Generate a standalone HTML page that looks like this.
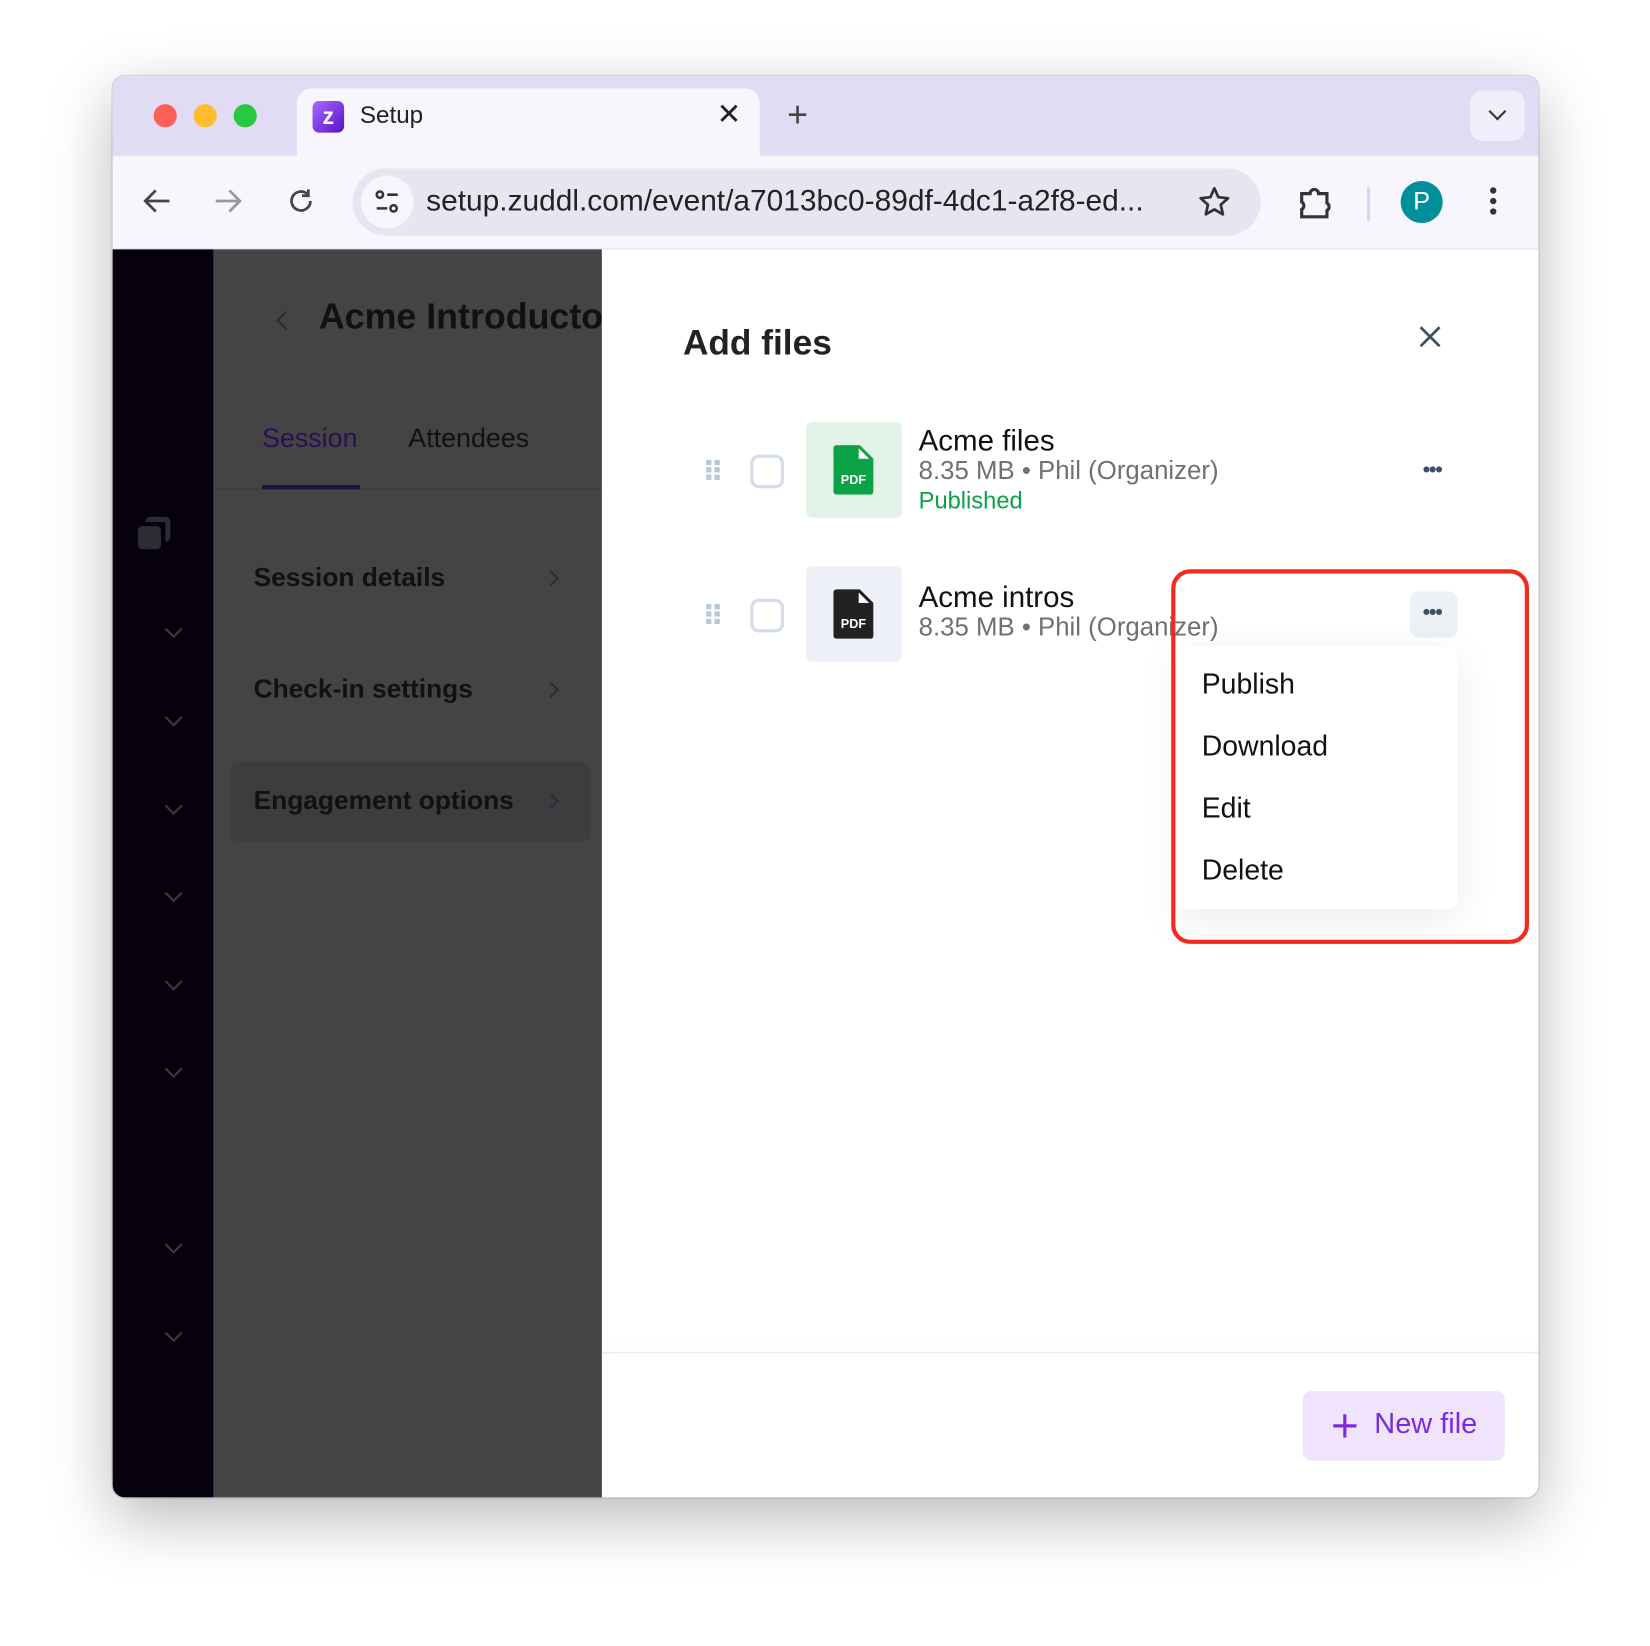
<!DOCTYPE html>
<html><head><meta charset="utf-8"><style>
html,body{margin:0;padding:0;width:1650px;height:1646px;overflow:hidden;background:#fff;font-family:"Liberation Sans",sans-serif}
#s{position:absolute;left:0;top:0;width:1568px;height:1564px;transform:scale(1.05230);transform-origin:0 0;background:#fff}
.a{position:absolute}
.win{left:107px;top:72px;width:1355px;height:1351px;border-radius:12px;overflow:hidden;box-shadow:0 20px 60px rgba(0,0,0,.28),0 0 0 1px rgba(0,0,0,.15);background:#fff}
.dot{width:22px;height:22px;border-radius:50%;top:27px}
.chev{left:52px;width:10px;height:10px;border-right:2px solid #3a3a42;border-bottom:2px solid #3a3a42;transform:rotate(45deg)}
.rchev{width:9px;height:9px;border-right:2px solid #2a2e36;border-top:2px solid #2a2e36;transform:rotate(45deg)}
.mi{font-size:27px;color:#111}
</style></head><body><div id="s">
<div class="a win">
 <div class="a" style="left:0;top:0;width:1355px;height:78px;background:#e1dbf4"></div>
 <div class="a dot" style="left:39px;background:#fe5f57"></div>
 <div class="a dot" style="left:77px;background:#febc2e"></div>
 <div class="a dot" style="left:115px;background:#28c840"></div>
 <div class="a" style="left:175px;top:12px;width:440px;height:70px;background:#f8f6fd;border-radius:14px 14px 0 0"></div>
 <div class="a" style="left:190px;top:24px;width:30px;height:30px;border-radius:6px;background:linear-gradient(135deg,#a66bff,#5a10c8);color:#fff;font-weight:bold;font-size:22px;text-align:center;line-height:30px">z</div>
 <div class="a" style="left:235px;top:24px;font-size:23px;color:#222">Setup</div>
 <div class="a" style="left:574px;top:20px;font-size:28px;color:#222">✕</div>
 <div class="a" style="left:641px;top:18px;font-size:34px;color:#444">+</div>
 <div class="a" style="left:1290px;top:14px;width:52px;height:48px;border-radius:12px;background:#f1eefb"></div>
 <div class="a" style="left:1310px;top:28px;width:10px;height:10px;border-right:2.5px solid #333;border-bottom:2.5px solid #333;transform:rotate(45deg)"></div>
 <div class="a" style="left:0;top:76px;width:1355px;height:88px;background:#f8f6fd;border-bottom:2px solid #e2dfe8"></div>
 <svg class="a" style="left:28px;top:106px" width="28" height="26" viewBox="0 0 28 26" fill="none" stroke="#444" stroke-width="2.6"><path d="M26 13H3M13 3L3 13l10 10"/></svg>
 <svg class="a" style="left:96px;top:106px" width="28" height="26" viewBox="0 0 28 26" fill="none" stroke="#999" stroke-width="2.6"><path d="M2 13h23M15 3l10 10-10 10"/></svg>
 <svg class="a" style="left:165px;top:105px" width="28" height="28" viewBox="0 0 28 28" fill="none" stroke="#444" stroke-width="2.6"><path d="M23 14a9 9 0 1 1-3-6.7"/><path d="M21 3v6h-6" /></svg>
 <div class="a" style="left:228px;top:88px;width:863px;height:64px;border-radius:32px;background:#e9e5f0"></div>
 <div class="a" style="left:236px;top:95px;width:50px;height:50px;border-radius:50%;background:#f8f6fd"></div>
 <svg class="a" style="left:248px;top:107px" width="26" height="26" viewBox="0 0 26 26" fill="none" stroke="#333" stroke-width="2.4"><circle cx="6" cy="6" r="3"/><line x1="13" y1="6" x2="23" y2="6"/><circle cx="19" cy="19" r="3"/><line x1="3" y1="19" x2="13" y2="19"/></svg>
 <div class="a" style="left:298px;top:103px;font-size:28.4px;color:#222;white-space:nowrap">setup.zuddl.com/event/a7013bc0-89df-4dc1-a2f8-ed...</div>
 <svg class="a" style="left:1031px;top:104px" width="32" height="32" viewBox="0 0 32 32" fill="none" stroke="#333" stroke-width="2.6" stroke-linejoin="round"><path d="M16 3l3.8 8.4 9.2 1-6.9 6.2 2 9.1L16 23l-8.1 4.7 2-9.1L3 12.4l9.2-1z"/></svg>
 <svg class="a" style="left:1126px;top:104px" width="34" height="34" viewBox="0 0 34 34" fill="none" stroke="#333" stroke-width="3"><path d="M4 8h8a4 4 0 0 1 8 0h8v9a4 4 0 0 1 0 7v6H4v-7a4 4 0 0 0 0-7z"/></svg>
 <div class="a" style="left:1192px;top:106px;width:3px;height:32px;background:#d8d3f0;border-radius:2px"></div>
 <div class="a" style="left:1224px;top:100px;width:40px;height:40px;border-radius:50%;background:#00909a;color:#fff;font-size:24px;text-align:center;line-height:40px">P</div>
 <div class="a" style="left:1309px;top:106px;width:6px;height:6px;border-radius:50%;background:#333;box-shadow:0 10px 0 #333,0 20px 0 #333"></div>
 <div class="a" style="left:0;top:165px;width:96px;height:1186px;background:#07000f"></div>
 <div class="a" style="left:96px;top:165px;width:369px;height:1186px;background:#444444"></div>
 <div class="a" style="left:24px;top:428px;width:22px;height:22px;border-radius:4px;background:#2c2c33"></div>
 <div class="a" style="left:31px;top:419px;width:24px;height:24px;border-radius:5px;border-top:5px solid #2c2c33;border-right:5px solid #2c2c33;box-sizing:border-box"></div>
 <div class="a chev" style="top:520px"></div><div class="a chev" style="top:604px"></div><div class="a chev" style="top:688px"></div><div class="a chev" style="top:771px"></div><div class="a chev" style="top:855px"></div><div class="a chev" style="top:938px"></div><div class="a chev" style="top:1105px"></div><div class="a chev" style="top:1189px"></div>
 <div class="a" style="left:158px;top:226px;width:11px;height:11px;border-left:2.5px solid #2a2e36;border-bottom:2.5px solid #2a2e36;transform:rotate(45deg)"></div>
 <div class="a" style="left:196px;top:210px;font-size:34px;font-weight:bold;color:#111;white-space:nowrap;width:269px;overflow:hidden">Acme Introductory</div>
 <div class="a" style="left:142px;top:331px;font-size:25.5px;color:#2a0f52">Session</div>
 <div class="a" style="left:281px;top:331px;font-size:25.5px;color:#111">Attendees</div>
 <div class="a" style="left:96px;top:392px;width:369px;height:1px;background:#3a3a3e"></div>
 <div class="a" style="left:142px;top:389px;width:93px;height:4px;background:#20103f"></div>
 <div class="a" style="left:134px;top:463px;font-size:25px;font-weight:bold;color:#111">Session details</div>
 <div class="a" style="left:134px;top:569px;font-size:25px;font-weight:bold;color:#111">Check-in settings</div>
 <div class="a" style="left:112px;top:652px;width:342px;height:76px;border-radius:8px;background:#3d3d3f"></div>
 <div class="a" style="left:134px;top:675px;font-size:25px;font-weight:bold;color:#111">Engagement options</div>
 <div class="a rchev" style="left:411px;top:472px"></div><div class="a rchev" style="left:411px;top:578px"></div><div class="a rchev" style="left:411px;top:684px"></div>
 <div class="a" style="left:465px;top:165px;width:890px;height:1186px;background:#fff"></div>
 <div class="a" style="left:542px;top:236px;font-size:33.5px;font-weight:bold;color:#222">Add files</div>
 <svg class="a" style="left:1241px;top:237px" width="22" height="22" viewBox="0 0 22 22" stroke="#3b5166" stroke-width="2.6"><path d="M2 2L20 20M20 2L2 20"/></svg>
 <svg class="a" style="left:564px;top:365px" width="14" height="20"><g fill="#b8c6d8"><rect x="0" y="0" width="5" height="5"/><rect x="8" y="0" width="5" height="5"/><rect x="0" y="7" width="5" height="5"/><rect x="8" y="7" width="5" height="5"/><rect x="0" y="14" width="5" height="5"/><rect x="8" y="14" width="5" height="5"/></g></svg>
 <div class="a" style="left:606px;top:360px;width:26px;height:26px;border:3px solid #d3dde9;border-radius:8px"></div>
 <div class="a" style="left:659px;top:329px;width:91px;height:91px;border-radius:6px;background:#e2f2e6"></div>
 <svg class="a" style="left:685px;top:351px" width="38" height="47" viewBox="0 0 38 47"><path d="M3 0h22l13 13v31a3 3 0 0 1-3 3H3a3 3 0 0 1-3-3V3a3 3 0 0 1 3-3z" fill="#0aa244"/><path d="M24 3v10h10z" fill="#fff"/><text x="19" y="37" font-size="12" font-weight="bold" fill="#fff" text-anchor="middle" font-family="Liberation Sans">PDF</text></svg>
 <div class="a" style="left:766px;top:331px;font-size:28px;color:#111">Acme files</div>
 <div class="a" style="left:766px;top:362px;font-size:24.5px;color:#707070">8.35 MB • Phil (Organizer)</div>
 <div class="a" style="left:766px;top:391px;font-size:22.5px;color:#0aa244">Published</div>
 <div class="a" style="left:1245px;top:364px;font-size:20px;color:#3b5166;letter-spacing:-1px;font-weight:bold">•••</div>
 <svg class="a" style="left:564px;top:502px" width="14" height="20"><g fill="#b8c6d8"><rect x="0" y="0" width="5" height="5"/><rect x="8" y="0" width="5" height="5"/><rect x="0" y="7" width="5" height="5"/><rect x="8" y="7" width="5" height="5"/><rect x="0" y="14" width="5" height="5"/><rect x="8" y="14" width="5" height="5"/></g></svg>
 <div class="a" style="left:606px;top:497px;width:26px;height:26px;border:3px solid #d3dde9;border-radius:8px"></div>
 <div class="a" style="left:659px;top:466px;width:91px;height:91px;border-radius:6px;background:#edf1f7"></div>
 <svg class="a" style="left:685px;top:488px" width="38" height="47" viewBox="0 0 38 47"><path d="M3 0h22l13 13v31a3 3 0 0 1-3 3H3a3 3 0 0 1-3-3V3a3 3 0 0 1 3-3z" fill="#222"/><path d="M24 3v10h10z" fill="#fff"/><text x="19" y="37" font-size="12" font-weight="bold" fill="#fff" text-anchor="middle" font-family="Liberation Sans">PDF</text></svg>
 <div class="a" style="left:766px;top:480px;font-size:28px;color:#111">Acme intros</div>
 <div class="a" style="left:766px;top:511px;font-size:24.5px;color:#707070">8.35 MB • Phil (Organizer)</div>
 <div class="a" style="left:1233px;top:490px;width:45px;height:44px;border-radius:8px;background:#edf1f6"></div>
 <div class="a" style="left:1245px;top:499px;font-size:20px;color:#3b5166;letter-spacing:-1px;font-weight:bold">•••</div>
 <div class="a" style="left:1012px;top:542px;width:266px;height:250px;background:#fff;border-radius:8px;box-shadow:0 10px 40px rgba(0,0,0,.08)"></div>
 <div class="a mi" style="left:1035px;top:563px">Publish</div>
 <div class="a mi" style="left:1035px;top:622px">Download</div>
 <div class="a mi" style="left:1035px;top:681px">Edit</div>
 <div class="a mi" style="left:1035px;top:740px">Delete</div>
 <div class="a" style="left:1006px;top:469px;width:340px;height:356px;border:4px solid #f32a1f;border-radius:18px;box-sizing:border-box"></div>
 <div class="a" style="left:465px;top:1213px;width:890px;height:1px;background:#e4e8ee;box-shadow:0 -6px 12px rgba(120,140,170,.18)"></div>
 <div class="a" style="left:1131px;top:1250px;width:192px;height:66px;border-radius:8px;background:#efe4fc"></div>
 <svg class="a" style="left:1159px;top:1271px" width="24" height="24" viewBox="0 0 24 24" stroke="#7a2be0" stroke-width="3"><path d="M12 1v22M1 12h22"/></svg>
 <div class="a" style="left:1199px;top:1265px;font-size:27.5px;color:#7a2be0">New file</div>
</div>
</div></body></html>
